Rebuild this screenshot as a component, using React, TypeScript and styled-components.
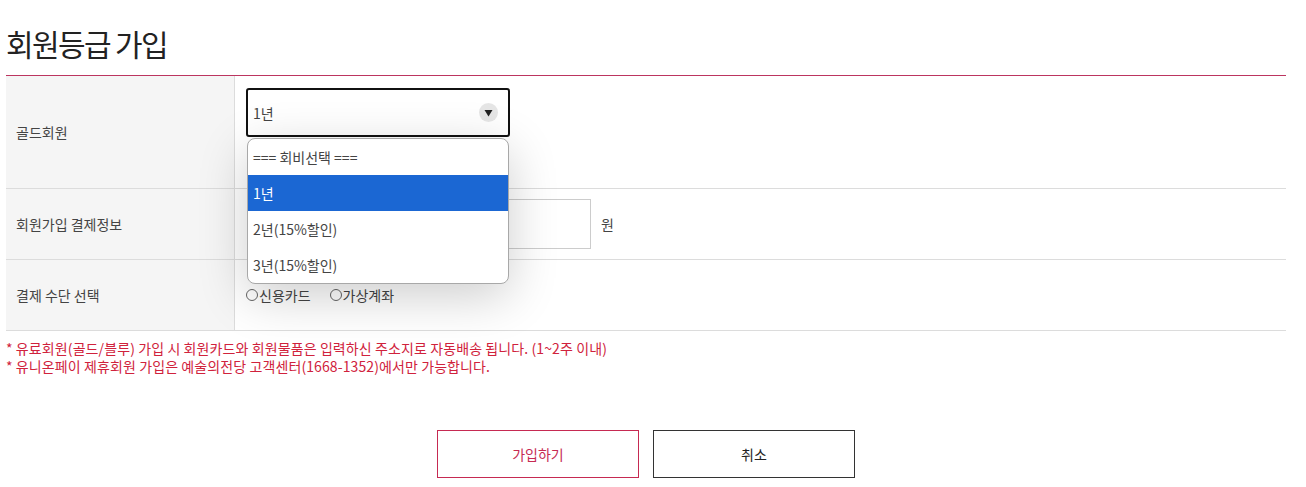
import * as React from "react";
import styled, { createGlobalStyle } from "styled-components";

const GlobalStyle = createGlobalStyle`
	html, body {
		margin: 0;
		padding: 0;
		background: #fff;
	}
	body {
		font-family: "Noto Sans CJK KR", "Noto Sans", sans-serif;
		color: #333;
	}
`;

const Page = styled.section`
	width: 1280px;
	padding: 25px 0 0 6px;
`;

const Title = styled.h2`
	margin: 0;
	padding-bottom: 14px;
	font-size: 30px;
	line-height: 36px;
	font-weight: 400;
	letter-spacing: -1.6px;
	color: #222;
`;

const FormTable = styled.div`
	border-top: 1px solid #bc3560;
`;

const Row = styled.div<{ $height: number }>`
	display: grid;
	grid-template-columns: 229px 1fr;
	height: ${(p) => p.$height}px;
	border-bottom: 1px solid #dcdcdc;
`;

const Label = styled.div`
	display: flex;
	align-items: center;
	padding-left: 10px;
	background: #f5f5f5;
	border-right: 1px solid #dcdcdc;
	font-size: 14px;
	color: #444;
`;

const Cell = styled.div<{ $top?: boolean }>`
	display: flex;
	align-items: ${(p) => (p.$top ? "flex-start" : "center")};
	padding: ${(p) => (p.$top ? "12px 0 0 11px" : "0 0 0 11px")};
	font-size: 14px;
	color: #444;
`;

const SelectWrap = styled.div`
	position: relative;
`;

const SelectBox = styled.div`
	display: flex;
	align-items: center;
	justify-content: space-between;
	box-sizing: border-box;
	width: 264px;
	height: 49px;
	padding: 0 10px 0 5px;
	border: 2px solid #111;
	border-radius: 3px;
	font-size: 14px;
	color: #444;
`;

const Arrow = styled.span`
	display: flex;
	align-items: center;
	justify-content: center;
	width: 19px;
	height: 19px;
	border-radius: 50%;
	background: #e6e6e6;
	svg {
		display: block;
	}
`;

const Menu = styled.ul`
	position: absolute;
	top: 50px;
	left: 1px;
	z-index: 5;
	box-sizing: border-box;
	width: 262px;
	margin: 0;
	padding: 0;
	list-style: none;
	background: #fff;
	border: 1px solid #a8a8a8;
	border-radius: 8px;
	overflow: hidden;
	box-shadow: 0 12px 50px rgba(0, 0, 0, 0.2);
`;

const Option = styled.li<{ $selected?: boolean }>`
	height: 36px;
	line-height: 36px;
	padding-left: 5px;
	font-size: 14px;
	color: ${(p) => (p.$selected ? "#fff" : "#444")};
	background: ${(p) => (p.$selected ? "#1b67d3" : "transparent")};
`;

const AmountInput = styled.input`
	box-sizing: border-box;
	width: 343px;
	height: 50px;
	margin-left: 2px;
	border: 1px solid #ccc;
	font: inherit;
	outline: none;
`;

const Unit = styled.span`
	margin-left: 10px;
`;

const RadioLabel = styled.label`
	display: inline-flex;
	align-items: center;
	margin-right: 19px;
	font-size: 14px;
	color: #444;
	&::before {
		content: "";
		box-sizing: border-box;
		width: 12px;
		height: 12px;
		margin-right: 1px;
		border: 1px solid #666;
		border-radius: 50%;
	}
`;

const Notes = styled.div`
	padding-top: 8px;
	font-size: 14px;
	line-height: 18px;
	color: #d0223c;
	letter-spacing: 0.1px;
`;

const ButtonRow = styled.div`
	display: flex;
	justify-content: center;
	gap: 14px;
	margin-top: 55px;
`;

const Button = styled.button<{ $primary?: boolean }>`
	width: 202px;
	height: 48px;
	background: #fff;
	border: 1px solid ${(p) => (p.$primary ? "#c62a52" : "#333")};
	color: ${(p) => (p.$primary ? "#c62a52" : "#222")};
	font-family: inherit;
	font-size: 14px;
	cursor: pointer;
`;

const options = ["=== 회비선택 ===", "1년", "2년(15%할인)", "3년(15%할인)"];

export default function App() {
	const [selected] = React.useState(1);

	return (
		<Page>
			<GlobalStyle />
			<Title>회원등급 가입</Title>
			<FormTable>
				<Row $height={112}>
					<Label>골드회원</Label>
					<Cell $top>
						<SelectWrap>
							<SelectBox>
								<span>{options[selected]}</span>
								<Arrow>
									<svg width="9" height="8" viewBox="0 0 9 8">
										<path d="M0.5 1 H8.5 L4.5 7.5 Z" fill="#222" />
									</svg>
								</Arrow>
							</SelectBox>
							<Menu>
								{options.map((o, i) => (
									<Option key={o} $selected={i === selected}>
										{o}
									</Option>
								))}
							</Menu>
						</SelectWrap>
					</Cell>
				</Row>
				<Row $height={70}>
					<Label>회원가입 결제정보</Label>
					<Cell>
						<AmountInput readOnly />
						<Unit>원</Unit>
					</Cell>
				</Row>
				<Row $height={70}>
					<Label>결제 수단 선택</Label>
					<Cell>
						<RadioLabel>신용카드</RadioLabel>
						<RadioLabel>가상계좌</RadioLabel>
					</Cell>
				</Row>
			</FormTable>
			<Notes>
				<div>* 유료회원(골드/블루) 가입 시 회원카드와 회원물품은 입력하신 주소지로 자동배송 됩니다. (1~2주 이내)</div>
				<div>* 유니온페이 제휴회원 가입은 예술의전당 고객센터(1668-1352)에서만 가능합니다.</div>
			</Notes>
			<ButtonRow>
				<Button $primary>가입하기</Button>
				<Button>취소</Button>
			</ButtonRow>
		</Page>
	);
}
